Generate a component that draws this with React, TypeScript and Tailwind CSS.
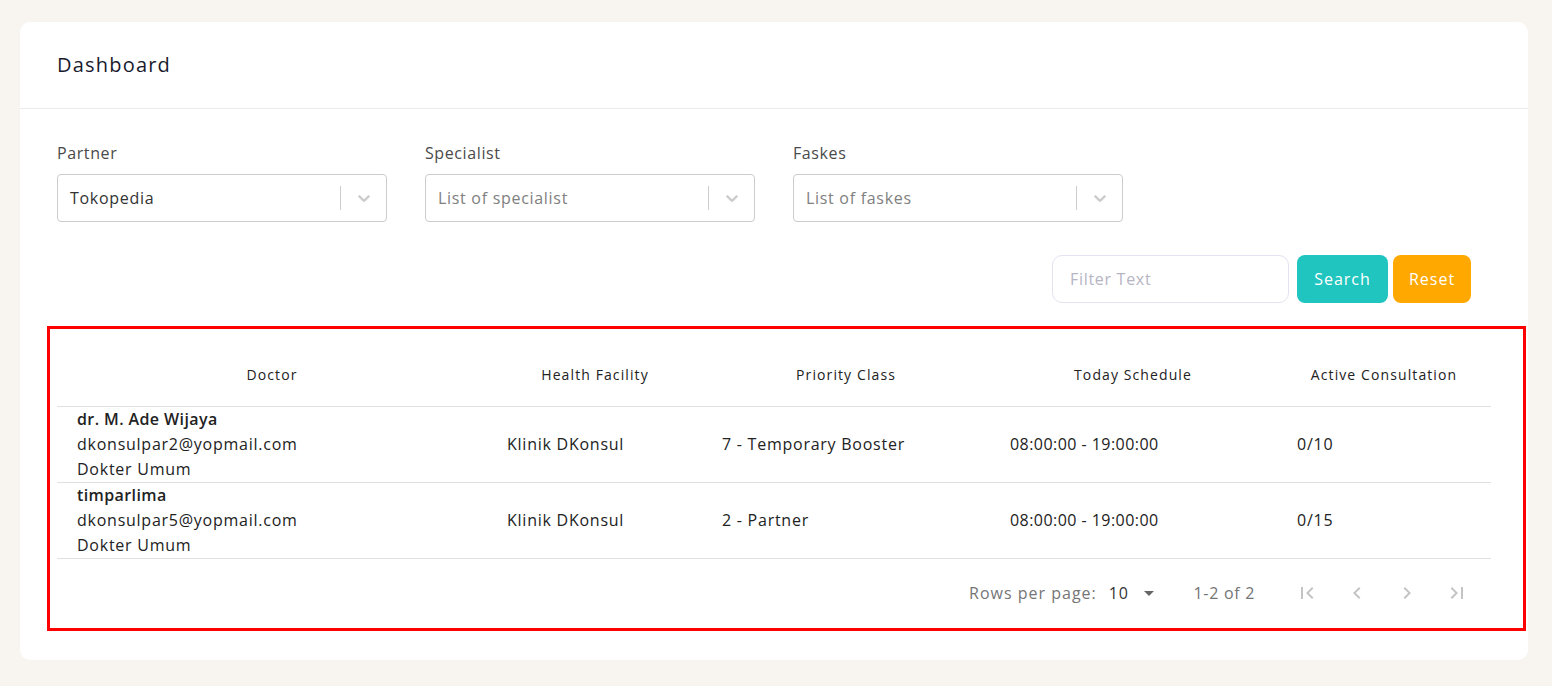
import React from "react";

const font = { fontFamily: "'Open Sans', 'Noto Sans', sans-serif" };

function Chevron() {
  return (
    <svg width="20" height="20" viewBox="0 0 20 20" className="fill-[#cccccc]">
      <path d="M4.516 7.548c0.436-0.446 1.043-0.481 1.576 0l3.908 3.747 3.908-3.747c0.533-0.481 1.141-0.446 1.574 0 0.436 0.445 0.408 1.197 0 1.615-0.406 0.418-4.695 4.502-4.695 4.502-0.217 0.223-0.502 0.335-0.787 0.335s-0.57-0.112-0.789-0.335c0 0-4.287-4.084-4.695-4.502s-0.436-1.17 0-1.615z" />
    </svg>
  );
}

function Select({ label, value, placeholder }: { label: string; value?: string; placeholder?: string }) {
  return (
    <div className="flex flex-col w-[330px]">
      <div className="h-[24px] leading-[24px] text-[16px] tracking-[0.6px] text-[#4a4a4a]">{label}</div>
      <div className="mt-[9px] h-[48px] flex items-center border border-[#cccccc] rounded-[4px] bg-white">
        <div className={"flex-1 pl-[12px] text-[16px] tracking-[0.7px] " + (value ? "text-[#333333]" : "text-[#808080]")}>
          {value ?? placeholder}
        </div>
        <div className="w-px h-[24px] bg-[#cccccc]" />
        <div className="w-[45px] flex items-center justify-center">
          <Chevron />
        </div>
      </div>
    </div>
  );
}

const cols = [
  { title: "Doctor", w: "w-[430px]" },
  { title: "Health Facility", w: "w-[216px]" },
  { title: "Priority Class", w: "w-[286px]" },
  { title: "Today Schedule", w: "w-[288px]" },
  { title: "Active Consultation", w: "w-[214px]" },
];

const rows = [
  { name: "dr. M. Ade Wijaya", email: "dkonsulpar2@yopmail.com", spec: "Dokter Umum", fac: "Klinik DKonsul", pri: "7 - Temporary Booster", sched: "08:00:00 - 19:00:00", active: "0/10" },
  { name: "timparlima", email: "dkonsulpar5@yopmail.com", spec: "Dokter Umum", fac: "Klinik DKonsul", pri: "2 - Partner", sched: "08:00:00 - 19:00:00", active: "0/15" },
];

function PageIcon({ d }: { d: string }) {
  return (
    <svg width="24" height="24" viewBox="0 0 24 24" className="fill-[#c4c4c4]">
      <path d={d} />
    </svg>
  );
}

export default function App() {
  return (
    <div style={font} className="min-h-[686px] bg-[#f8f4f0] pt-[22px] pl-[20px] pr-[24px] pb-[26px]">
      <div className="bg-white rounded-[10px] w-[1508px] h-[638px]">
        <div className="h-[87px] px-[37px] flex items-center border-b border-[#ebebeb]">
          <h1 className="text-[20px] font-medium tracking-[1.2px] text-[#1a1a2e]">Dashboard</h1>
        </div>
        <div className="px-[37px] pt-[32px]">
          <div className="flex gap-[38px]">
            <Select label="Partner" value="Tokopedia" />
            <Select label="Specialist" placeholder="List of specialist" />
            <Select label="Faskes" placeholder="List of faskes" />
          </div>
          <div className="mt-[33px] mr-[20px] flex justify-end items-center h-[48px]">
            <div className="w-[237px] h-[48px] border border-[#e4e2f0] rounded-[10px] flex items-center pl-[17px] text-[16px] tracking-[0.7px] text-[#b5b5c3]">
              Filter Text
            </div>
            <button className="ml-[8px] w-[91px] h-[48px] rounded-[8px] bg-[#1fc5be] text-white text-[16px] font-medium tracking-[1px]">
              Search
            </button>
            <button className="ml-[5px] w-[78px] h-[48px] rounded-[8px] bg-[#ffa800] text-white text-[16px] font-medium tracking-[1px]">
              Reset
            </button>
          </div>
          <div className="mt-[23px] ml-[-10px] mr-[-35px] border-[3px] border-[#ff0000] pl-[7px] pr-[32px] pt-[13px] pb-[7px]">
            <div className="flex h-[65px] pt-[1px] items-center border-b border-[#e0e0e0]">
              {cols.map((c) => (
                <div key={c.title} className={c.w + " text-center text-[14px] font-medium tracking-[1.1px] text-[#222222]"}>
                  {c.title}
                </div>
              ))}
            </div>
            {rows.map((r) => (
              <div key={r.email} className="flex items-center border-b border-[#e0e0e0] text-[16px] tracking-[0.75px] text-[#222222] leading-[25px]">
                <div className="w-[430px] pl-[20px] flex flex-col">
                  <span className="font-semibold tracking-[0.4px]">{r.name}</span>
                  <span>{r.email}</span>
                  <span>{r.spec}</span>
                </div>
                <div className="w-[216px] pl-[20px]">{r.fac}</div>
                <div className="w-[286px] pl-[19px]">{r.pri}</div>
                <div className="w-[288px] pl-[21px] tracking-[0.45px]">{r.sched}</div>
                <div className="w-[214px] pl-[20px]">{r.active}</div>
              </div>
            ))}
            <div className="mt-[6px] h-[56px] flex items-center justify-end pr-[22px] text-[16px] tracking-[0.7px] text-[#757575]">
              <span className="tracking-[1px]">Rows per page:</span>
              <span className="ml-[12px] text-[#333333]">10</span>
              <svg width="24" height="24" viewBox="0 0 24 24" className="ml-[9px] fill-[#666666]">
                <path d="M7 10l5 5 5-5z" />
              </svg>
              <span className="ml-[32px]">1-2 of 2</span>
              <div className="ml-[40px] flex items-center gap-[26px]">
                <PageIcon d="M18.41 16.59L13.82 12l4.59-4.59L17 6l-6 6 6 6zM6 6h2v12H6z" />
                <PageIcon d="M15.41 7.41L14 6l-6 6 6 6 1.41-1.41L10.83 12z" />
                <PageIcon d="M10 6L8.59 7.41 13.17 12l-4.58 4.59L10 18l6-6z" />
                <PageIcon d="M5.59 7.41L10.18 12l-4.59 4.59L7 18l6-6-6-6zM16 6h2v12h-2z" />
              </div>
            </div>
          </div>
        </div>
      </div>
    </div>
  );
}
